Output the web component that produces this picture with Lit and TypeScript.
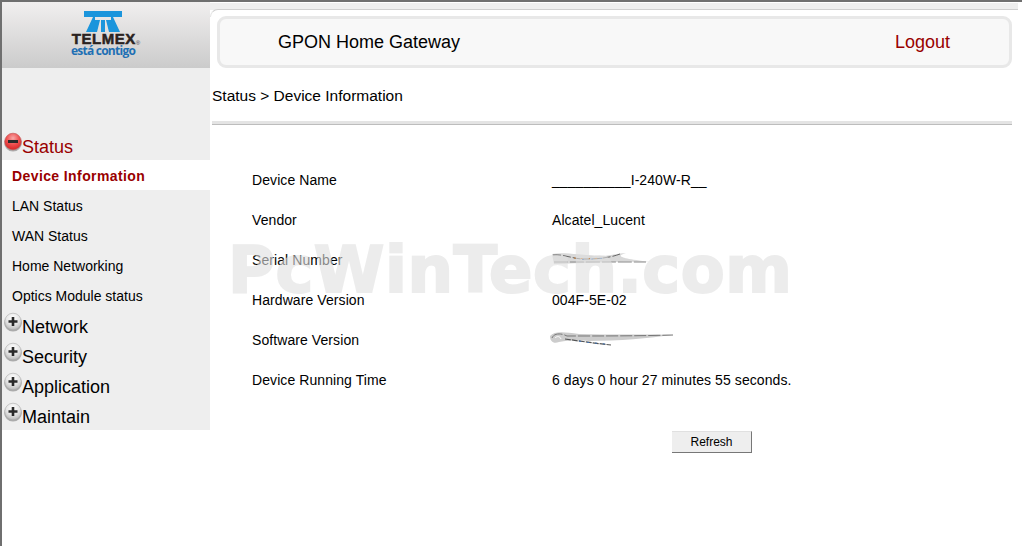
import { LitElement, html, css, svg } from "lit";
import { customElement } from "lit/decorators.js";

const rows: [string, string | null][] = [
  ["Device Name", "__________I-240W-R__"],
  ["Vendor", "Alcatel_Lucent"],
  ["Serial Number", null],
  ["Hardware Version", "004F-5E-02"],
  ["Software Version", null],
  ["Device Running Time", "6 days 0 hour 27 minutes 55 seconds."],
];
const subs = ["Device Information", "LAN Status", "WAN Status", "Home Networking", "Optics Module status"];
const groups = ["Network", "Security", "Application", "Maintain"];

const orb = (minus: boolean) => html`<svg class="orb" width="20" height="20" viewBox="0 0 20 20">
  <defs>
    <radialGradient id="${minus ? "r" : "g"}" cx=".5" cy=".3" r=".75">
      ${minus
        ? svg`<stop offset="0" stop-color="#f7a9a9"/><stop offset=".5" stop-color="#ee5050"/><stop offset="1" stop-color="#d11f1f"/>`
        : svg`<stop offset="0" stop-color="#ffffff"/><stop offset=".55" stop-color="#e4e4e4"/><stop offset="1" stop-color="#b4b4b4"/>`}
    </radialGradient>
  </defs>
  <ellipse cx="10" cy="11" rx="8.8" ry="8.6" fill="#8f8f8f" opacity=".7"/>
  <circle cx="10" cy="9.5" r="8.3" fill="url(#${minus ? "r" : "g"})" stroke="${minus ? "#c05050" : "#adadad"}" stroke-width=".6"/>
  <path d="${minus ? "M5 8h10v3H5z" : "M5.500 8.200h3.200V5h2.600v3.200h3.200v2.600h-3.200V14H8.700v-3.200H5.500z"}" fill="#2a2a2a"/>
</svg>`;

@customElement("app-root")
export class AppRoot extends LitElement {
  static styles = css`
    :host {
      display: block;
      width: 1022px;
      height: 546px;
      box-sizing: border-box;
      overflow: hidden;
      position: relative;
      background: #fff;
      border-top: 2px solid #6f6f6f;
      border-left: 2px solid #6f6f6f;
      font-family: "Liberation Sans", Arial, sans-serif;
      color: #000;
    }
    .page { display: grid; grid-template-columns: 208px 1fr; height: 100%; }
    .side { display: flex; flex-direction: column; }
    .logo {
      height: 66px;
      background: linear-gradient(#f1efef, #cbcbcb);
      display: flex;
      flex-direction: column;
      align-items: center;
      padding: 9px 6px 0 0;
      box-sizing: border-box;
    }
    .logo svg { display: block; }
    .telmex {
      font: 900 15px/13px "Liberation Sans", sans-serif;
      color: #2b2321;
      letter-spacing: .55px;
      margin-top: 0;
      -webkit-text-stroke: .5px #2b2321;
      position: relative;
      left: 3px;
    }
    .telmex sup { font-size: 6px; line-height: 0; font-weight: 400; color: #444; -webkit-text-stroke: 0; letter-spacing: 0; vertical-align: -1px; }
    .contigo {
      font: 700 12px/11px "Open Sans", "Noto Sans", sans-serif;
      color: #1f70b4;
      letter-spacing: -.75px;
      position: relative;
      left: 0;
    }
    .menu { background: #eeeeee; padding-top: 62px; display: flex; flex-direction: column; }
    .grp {
      height: 30px;
      display: flex;
      align-items: flex-start;
      font-size: 18px;
      line-height: 20px;
      color: #000;
      box-sizing: border-box;
    }
    .grp span { padding-top: 7px; margin-left: -1px; }
    .grp .orb { margin: 2px 0 0 1px; flex: none; }
    .grp.open { color: #990000; }
    .sub { height: 30px; line-height: 32px; font-size: 14px; padding-left: 10px; }
    .sub.on { background: #fff; color: #990000; font-weight: 700; letter-spacing: .4px; }
    .main { display: flex; flex-direction: column; min-width: 0; }
    .strip { height: 7px; background: #eeeeee; margin-right: 4px; margin-top: 1px; }
    .corner {
      height: 8px;
      margin: -1px 4px -8px 0;
      border-top: 1px solid #cfcfcf;
      border-left: 1px solid #e6e6e6;
      border-top-left-radius: 8px;
      background: #fff;
      box-sizing: border-box;
    }
    .panel {
      margin-right: 4px;
      padding: 7px 6px 0 7px;
      flex: 1;
      display: flex;
      flex-direction: column;
    }
    .head {
      height: 52px;
      box-sizing: border-box;
      border: 3px solid #e8e8e8;
      border-radius: 9px;
      background: #f8f8f8;
      display: flex;
      justify-content: space-between;
      align-items: center;
      font-size: 18px;
      padding: 0 59px 0 58px;
    }
    .logout { color: #990000; }
    .crumb { font-size: 15.500px; line-height: 20px; margin: 18px 0 0 -5px; }
    .rule { height: 3px; background: #e4e4e4; border-bottom: 1px solid #bdbdbd; margin: 15px 0 0 -5px; }
    .table { margin: 35px 0 0 35px; display: flex; flex-direction: column; }
    .row { height: 40px; display: grid; grid-template-columns: 300px 1fr; align-items: center; font-size: 14px; letter-spacing: .08px; position: relative; }
    .smear { display: block; }
    .soft { margin-left: -3px; }
    .actions { margin: 31px 0 0 455px; }
    button {
      width: 80px;
      height: 22px;
      padding: 0;
      background: #eeeeee;
      border: none;
      border-right: 1px solid #777;
      border-bottom: 1px solid #777;
      border-top: 1px solid #e0e0e0;
      font: 12px "Liberation Sans", sans-serif;
      color: #000;
    }
    .mark {
      position: absolute;
      left: 226px;
      top: 233px;
      font: 700 64px/70px "DejaVu Sans", sans-serif;
      -webkit-text-stroke: 2px #e0e0e0;
      color: #e0e0e0;
      opacity: .6;
      white-space: nowrap;
      pointer-events: none;
      letter-spacing: .5px;
    }
  `;

  private smear(kind: string) {
    if (kind === "Serial Number") {
      return html`<svg class="smear" width="110" height="20" viewBox="0 0 110 20">
        <path d="M0 4 C12 2 26 5 50 6 C58 6 66 3 74 3 C64 6 66 8 98 12 C70 11 36 13 2 14 Z" fill="#d8d8d8"/>
        <path d="M1 5 C14 4 22 10 36 9 C44 9 58 8 68 4" stroke="#666" stroke-width="1" fill="none" stroke-dasharray="8 2"/>
        <path d="M22 8 C30 9 40 9 50 8" stroke="#c87a30" stroke-width="1" fill="none" stroke-dasharray="2 5"/>
        <path d="M30 9.500 C38 9 46 9 52 8" stroke="#3a72b8" stroke-width="1" fill="none" stroke-dasharray="2 7"/>
        <path d="M2 12 C30 12 60 12 94 12" stroke="#8a8a8a" stroke-width="1" fill="none" stroke-dasharray="14 2"/>
      </svg>`;
    }
    return html`<svg class="smear soft" width="128" height="20" viewBox="0 0 128 20">
      <path d="M1 6 C6 1 14 2 30 4 C60 5 100 4 124 5 C100 8 70 11 40 11 C30 10 20 10 10 12 C5 14 1 12 1 6 Z" fill="#cccccc"/>
      <path d="M3 8 C5 3 12 3 18 6 C50 6 90 6 124 5" stroke="#777" stroke-width="1" fill="none" stroke-dasharray="12 2"/>
      <path d="M6 8 C8 6 11 6 12 9" stroke="#fff" stroke-width="1" fill="none"/>
      <path d="M16 9 C30 11 44 13 62 15" stroke="#555" stroke-width="1.200" fill="none" stroke-dasharray="6 1"/>
      <path d="M30 11 C40 13 48 13 56 14" stroke="#3a72b8" stroke-width="1" fill="none" stroke-dasharray="2 6"/>
    </svg>`;
  }

  render() {
    return html`<div class="page">
      <div class="side">
        <div class="logo">
          <svg width="38" height="21" viewBox="0 0 38 21">
            <path fill="#1b95dc" d="M0 0H38V6H29L36 21H25L22 9H27V6H11V9H16L13 21H2L9 6H0Z"/>
            <path fill="#1b95dc" d="M17 9H21V21H17Z"/>
          </svg>
          <div class="telmex">TELMEX<sup>®</sup></div>
          <div class="contigo">está contigo</div>
        </div>
        <div class="menu">
          <div class="grp open">${orb(true)}<span>Status</span></div>
          ${subs.map((s, i) => html`<div class="sub ${i === 0 ? "on" : ""}">${s}</div>`)}
          ${groups.map((g) => html`<div class="grp">${orb(false)}<span>${g}</span></div>`)}
        </div>
      </div>
      <div class="main">
        <div class="strip"></div>
        <div class="corner"></div>
        <div class="panel">
          <div class="head"><span>GPON Home Gateway</span><span class="logout">Logout</span></div>
          <div class="crumb">Status &gt; Device Information</div>
          <div class="rule"></div>
          <div class="table">
            ${rows.map(
              ([k, v]) => html`<div class="row"><span>${k}</span>${v === null ? this.smear(k) : html`<span>${v}</span>`}</div>`
            )}
          </div>
          <div class="actions"><button>Refresh</button></div>
        </div>
      </div>
    </div>
    <div class="mark">PcWinTech.com</div>`;
  }
}
